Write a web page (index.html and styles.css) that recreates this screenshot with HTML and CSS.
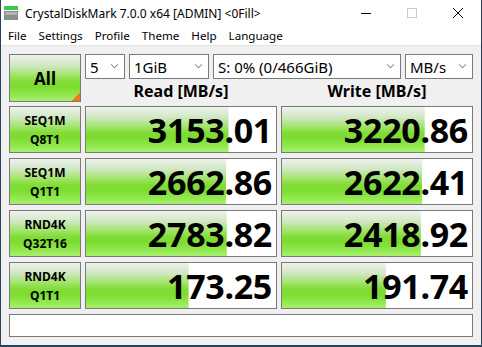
FILE: index.html
```html
<!DOCTYPE html>
<html lang="en">
<head>
  <meta charset="UTF-8"/>
  <title>CrystalDiskMark 7.0.0 x64 [ADMIN] &lt;0Fill&gt;</title>
  <link rel="stylesheet" href="styles.css">
</head>
<body>
  <div class="window">
    <header class="titlebar">
      <svg class="app-icon" viewBox="0 0 16 16">
        <rect x="1" y="1" width="14" height="4" fill="#3cc84a"/>
        <rect x="1" y="6" width="14" height="9" fill="#8c8c8c"/>
        <rect x="2" y="7" width="12" height="3" fill="#b4b4b4"/>
        <rect x="3" y="12" width="3" height="1.5" fill="#3cc84a"/>
      </svg>
      <span class="title">CrystalDiskMark 7.0.0 x64 [ADMIN] &lt;0Fill&gt;</span>
      <div class="controls">
        <div class="control">
          <svg viewBox="0 0 10 10"><path d="M0 5.5h10" stroke="#000" stroke-width="1"/></svg>
        </div>
        <div class="control">
          <svg viewBox="0 0 10 10"><rect x="0.5" y="0.5" width="9" height="9" fill="none" stroke="#cccccc" stroke-width="1"/></svg>
        </div>
        <div class="control">
          <svg viewBox="0 0 10 10"><path d="M0 0L10 10M10 0L0 10" stroke="#000" stroke-width="1"/></svg>
        </div>
      </div>
    </header>

    <nav class="menubar">
      <span>File</span>
      <span>Settings</span>
      <span>Profile</span>
      <span>Theme</span>
      <span>Help</span>
      <span>Language</span>
    </nav>

    <main class="content">
      <div class="top">
        <button class="all-button">All<span class="corner"></span></button>
        <div class="settings">
          <div class="selects">
            <div class="select select-count">5<span class="chevron"></span></div>
            <div class="select select-size">1GiB<span class="chevron"></span></div>
            <div class="select select-drive">S: 0% (0/466GiB)<span class="chevron"></span></div>
            <div class="select select-unit">MB/s<span class="chevron"></span></div>
          </div>
          <div class="headers">
            <div>Read [MB/s]</div>
            <div>Write [MB/s]</div>
          </div>
        </div>
      </div>

      <div class="row">
        <div class="test-button">SEQ1M<br>Q8T1</div>
        <div class="result" style="--fill: 75.0%">3153.01</div>
        <div class="result" style="--fill: 75.1%">3220.86</div>
      </div>
      <div class="row">
        <div class="test-button">SEQ1M<br>Q1T1</div>
        <div class="result" style="--fill: 73.8%">2662.86</div>
        <div class="result" style="--fill: 73.7%">2622.41</div>
      </div>
      <div class="row">
        <div class="test-button">RND4K<br>Q32T16</div>
        <div class="result" style="--fill: 74.1%">2783.82</div>
        <div class="result" style="--fill: 73.1%">2418.92</div>
      </div>
      <div class="row">
        <div class="test-button">RND4K<br>Q1T1</div>
        <div class="result" style="--fill: 54.0%">173.25</div>
        <div class="result" style="--fill: 54.7%">191.74</div>
      </div>

      <div class="status"></div>
    </main>
  </div>
</body>
</html>
```

FILE: styles.css
```css
:root {
  --frame: #2a4259;
  --face: #f0f0f0;
  --edge: #7a7a7a;
  --green: linear-gradient(to bottom, #eef2ec 0%, #d2e8c6 22%, #a6e472 42%, #80dc34 58%, #7ddc30 70%, #90e84e 86%, #a9f06e 100%);
}

* {
  margin: 0;
  padding: 0;
  box-sizing: border-box;
}

body {
  font-family: 'Noto Sans', 'DejaVu Sans', sans-serif;
  color: #000;
  background: #fff;
}

.window {
  width: 482px;
  height: 347px;
  display: flex;
  flex-direction: column;
  border: 1px solid var(--frame);
  border-top: none;
  border-bottom-width: 2px;
  background: var(--face);
}

/* Title bar */
.titlebar {
  height: 26px;
  display: flex;
  align-items: center;
  background: #fff;
}

.app-icon {
  width: 16px;
  height: 16px;
  margin: 0 6px 0 2px;
}

.title {
  flex: 1;
  font-size: 12px;
}

.controls {
  display: flex;
  height: 100%;
}

.control {
  width: 46px;
  display: flex;
  align-items: center;
  justify-content: center;
}

.control svg {
  width: 10px;
  height: 10px;
}

/* Menu */
.menubar {
  height: 20px;
  display: flex;
  align-items: center;
  padding-left: 1px;
  background: #fff;
  border-bottom: 1px solid #e3e3e3;
  font-size: 11.6px;
}

.menubar span {
  padding: 0 6px;
}

/* Main area */
.content {
  padding: 8px 8px 0;
  display: flex;
  flex-direction: column;
}

.top {
  display: flex;
  gap: 4px;
  margin-bottom: 4px;
}

.all-button {
  position: relative;
  width: 72px;
  height: 48px;
  border: 1px solid var(--edge);
  background: var(--green);
  font-family: inherit;
  font-size: 17px;
  font-weight: 700;
}

.corner {
  position: absolute;
  right: 0;
  bottom: 0;
  width: 8px;
  height: 8px;
  background: linear-gradient(135deg, transparent 50%, #f07818 50%);
}

.settings {
  flex: 1;
  display: flex;
  flex-direction: column;
}

.selects {
  display: flex;
  gap: 4px;
}

.select {
  height: 25px;
  display: flex;
  align-items: center;
  padding-left: 4px;
  background: #fff;
  border: 1px solid var(--edge);
  font-size: 15px;
}

.select-count { width: 40px; }
.select-size { width: 80px; }
.select-drive { width: 188px; }
.select-unit { width: 68px; }

.chevron {
  margin-left: auto;
  margin-right: 6px;
  width: 7px;
  height: 7px;
  border-right: 1px solid #707070;
  border-bottom: 1px solid #707070;
  transform: translateY(-2px) rotate(45deg) scale(0.75, 0.75);
}

.headers {
  flex: 1;
  display: flex;
  gap: 4px;
  align-items: flex-end;
}

.headers div {
  width: 192px;
  text-align: center;
  font-size: 16px;
  font-weight: 700;
  line-height: 22px;
}

/* Result rows */
.row {
  display: flex;
  gap: 4px;
  height: 47px;
  margin-bottom: 5px;
}

.test-button {
  width: 72px;
  display: flex;
  align-items: center;
  justify-content: center;
  text-align: center;
  border: 1px solid var(--edge);
  background: var(--green);
  font-size: 12px;
  font-weight: 700;
  line-height: 19px;
}

.result {
  width: 192px;
  display: flex;
  align-items: center;
  justify-content: flex-end;
  padding-right: 4px;
  border: 1px solid var(--edge);
  background: var(--green) no-repeat left top / var(--fill) 100%, #fff;
  font-size: 34px;
  font-weight: 700;
  letter-spacing: -0.3px;
}

.status {
  height: 23px;
  background: #fff;
  border: 1px solid var(--edge);
}
```
